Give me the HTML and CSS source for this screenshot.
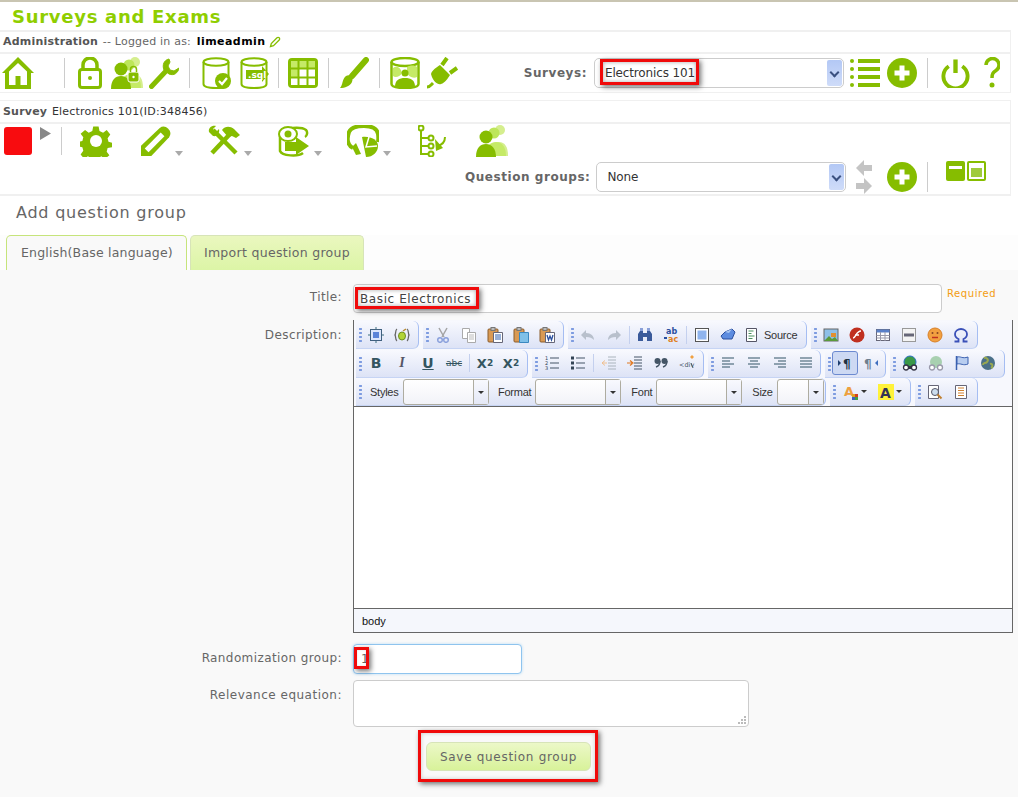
FILE: index.html
```html
<!DOCTYPE html>
<html lang="en">
<head>
<meta charset="utf-8">
<title>Surveys and Exams</title>
<link rel="stylesheet" href="styles.css">
</head>
<body>
<svg class="defs" width="0" height="0" aria-hidden="true">
  <defs>
    <symbol id="i-plus" viewBox="0 0 30 30"><circle cx="15" cy="15" r="15" fill="#86bd00"/><path d="M15 7.500v15M7.500 15h15" stroke="#fff" stroke-width="5"/></symbol>
    <symbol id="i-users" viewBox="0 0 32 32"><circle cx="24" cy="5" r="5" fill="#d5ee8e"/><path d="M13 31c0-9 4-14 10-14s9 5 9 14z" fill="#d5ee8e"/><circle cx="18" cy="8" r="5.500" fill="#bde65a"/><path d="M9 31c0-9 5-14 11-14s10 5 10 14z" fill="#c5ea66"/><circle cx="10" cy="12" r="6.500" fill="#86bd00"/><path d="M0 32c0-9 4-13 10-13s10 5 10 13z" fill="#86bd00"/></symbol>
  </defs>
</svg>
<div class="window-edge"></div>
<header class="brand">Surveys and Exams</header>

<section class="panel">
  <div class="panel-title"><b>Administration</b> -- Logged in as: <strong>limeadmin</strong>
    <svg class="edit-pen" viewBox="0 0 12 12"><path d="M1.500 10.500 2.300 7.500 8 1.800a1.400 1.400 0 0 1 2.200 2.200L4.500 9.700z" fill="none" stroke="#86bd00" stroke-width="1.300"/></svg>
  </div>
  <div class="toolbar admin-bar">
    <svg class="ic home" viewBox="0 0 32 32"><path d="M16 0 32 16h-3v16H3V16H0z" fill="#86bd00"/><path d="M16 6 7 14.500V28h6.500v-9h5v9H25V14.500z" fill="#fff"/></svg>
    <i class="vsep s1"></i>
    <svg class="ic lock" viewBox="0 0 24 32"><path d="M5 13V8a7 7 0 0 1 14 0v5" fill="none" stroke="#86bd00" stroke-width="3.500"/><rect y="11" width="24" height="21" rx="4" fill="#86bd00"/><rect x="3" y="14" width="18" height="15" rx="1" fill="#fff"/><circle cx="12" cy="21" r="2" fill="#86bd00"/></svg>
    <svg class="ic userlock" viewBox="0 0 32 32"><use href="#i-users" width="32" height="32"/><rect x="17" y="15" width="11" height="10" rx="2" fill="#86bd00" stroke="#fff"/><path d="M19.500 15v-2.500a3 3 0 0 1 6 0V15" fill="none" stroke="#86bd00" stroke-width="1.500"/><circle cx="22.500" cy="20" r="1.200" fill="#fff"/></svg>
    <svg class="ic wrench" viewBox="0 0 30 32"><path d="M2.500 29.500 17 14" stroke="#86bd00" stroke-width="5" stroke-linecap="round"/><path d="M20 2c-5 1-7 6-5 11l5 4c5 2 9-1 10-6l-5 3-4-1-2-4 2-4z" fill="#86bd00" stroke="#86bd00"/></svg>
    <i class="vsep s2"></i>
    <svg class="ic db" viewBox="0 0 30 32"><ellipse cx="14" cy="5" rx="12.500" ry="3.800" fill="#fff" stroke="#86bd00" stroke-width="2"/><path d="M1.500 5v22c0 3 6 4 12.500 4s12.500-1 12.500-4V5" fill="none" stroke="#86bd00" stroke-width="2"/><circle cx="21" cy="24" r="8" fill="#86bd00"/><path d="m17 24 3 3 5-6" fill="none" stroke="#fff" stroke-width="2.200"/></svg>
    <svg class="ic db2" viewBox="0 0 30 32"><ellipse cx="14" cy="5" rx="12.500" ry="3.800" fill="#fff" stroke="#86bd00" stroke-width="2"/><path d="M1.500 5v22c0 3 6 4 12.500 4s12.500-1 12.500-4V5" fill="none" stroke="#86bd00" stroke-width="2"/><path d="M6 13h16V9l7 8-7 8v-3H6z" fill="#86bd00"/><text x="8" y="21" class="sql-label">.sql</text></svg>
    <i class="vsep s3"></i>
    <svg class="ic grid-i" viewBox="0 0 30 30"><rect width="30" height="30" rx="4" fill="#86bd00"/><g fill="#fff"><rect x="3" y="3" width="6.500" height="6.500" fill="#c5ea66"/><rect x="11.500" y="3" width="7" height="6.500" fill="#c5ea66"/><rect x="20.500" y="3" width="6.500" height="6.500" fill="#c5ea66"/><rect x="3" y="11.500" width="6.500" height="7" fill="#c5ea66"/><rect x="11.500" y="11.500" width="7" height="7"/><rect x="20.500" y="11.500" width="6.500" height="7"/><rect x="3" y="20.500" width="6.500" height="6.500"/><rect x="11.500" y="20.500" width="7" height="6.500"/><rect x="20.500" y="20.500" width="6.500" height="6.500"/></g></svg>
    <i class="vsep s4"></i>
    <svg class="ic brush" viewBox="0 0 30 32"><path d="M27 3 13 19" stroke="#86bd00" stroke-width="6" stroke-linecap="round"/><path d="M7 19c4-2 8 1 6 6-2 4-7 6-12 6 3-3 2-9 6-12z" fill="#86bd00"/></svg>
    <i class="vsep s5"></i>
    <svg class="ic dbp" viewBox="0 0 30 32"><path d="M1.500 5v22c0 3 6 4 13.500 4s13.500-1 13.500-4V5" fill="#fff" stroke="#86bd00" stroke-width="2.500"/><ellipse cx="15" cy="5" rx="13.500" ry="4" fill="#fff" stroke="#86bd00" stroke-width="2.500"/><path d="M3 11c4-3 8 0 9 5-2 4-7 5-9 3zM17 10c3-2 8-2 10 0v10c-4 2-9-1-10-4z" fill="#c5ea66"/><circle cx="15" cy="16" r="3.500" fill="#86bd00"/><path d="M5 30c0-7 4-9 10-9s10 2 10 9z" fill="#86bd00"/></svg>
    <svg class="ic plug" viewBox="0 0 32 32"><path d="M1 30c3 0 4-2 6-4" stroke="#86bd00" stroke-width="3" fill="none"/><path d="M5 17c1-4 6-7 9-9l10 10c-2 3-5 8-9 9-3 1-8-2-10-10z" fill="#86bd00"/><path d="m16 8 5-7M24 16l7-5" stroke="#86bd00" stroke-width="4"/></svg>
    <div class="right-tools">
      <span class="tool-label">Surveys:</span>
      <div class="select survey-select">
        <span>Electronics 101</span><i class="sel-arrow"></i>
        <i class="mark mark-survey"></i>
      </div>
      <svg class="ic list" viewBox="0 0 30 30"><g fill="#86bd00"><circle cx="2" cy="3" r="2"/><circle cx="2" cy="11" r="2"/><circle cx="2" cy="19" r="2"/><circle cx="2" cy="27" r="2"/><rect x="8" y="1" width="22" height="4"/><rect x="8" y="9" width="22" height="4"/><rect x="8" y="17" width="22" height="4"/><rect x="8" y="25" width="22" height="4"/></g></svg>
      <svg class="ic plus"><use href="#i-plus"/></svg>
      <i class="vsep s6"></i>
      <svg class="ic power" viewBox="0 0 30 30"><path d="M8 8a12.500 12.500 0 1 0 14 0" fill="none" stroke="#86bd00" stroke-width="4"/><path d="M15 1v14" stroke="#86bd00" stroke-width="4.500"/></svg>
      <svg class="ic help" viewBox="0 0 16 32"><path d="M2 8a6.500 6.500 0 1 1 10 5.500c-3 2-4 3-4 7.500" fill="none" stroke="#86bd00" stroke-width="3.500"/><circle cx="8" cy="28" r="2.500" fill="#86bd00"/></svg>
    </div>
  </div>
</section>

<section class="panel survey-panel">
  <div class="panel-title survey-title"><b>Survey</b> Electronics 101(ID:348456)</div>
  <div class="survey-tools">
    <div class="toolbar survey-row">
      <span class="stop"></span>
      <svg class="play" viewBox="0 0 11 13"><path d="M0 0 11 6.500 0 13z" fill="#888"/></svg>
      <i class="vsep s7"></i>
      <svg class="ic gear" viewBox="0 0 32 32"><path d="M13 0h6l1 5 4 2 4-3 4 5-3 4 1 4 4 1v5l-5 1-1 4 3 4-5 4-4-3-3 2-1 5h-6l-1-5-4-2-4 3-4-5 3-4-1-4-5-1v-5l5-1 1-4-3-4 5-4 4 3 4-2z" transform="translate(1.500 1.500) scale(.9)" fill="#86bd00"/><circle cx="16" cy="16" r="6" fill="#fff"/></svg>
      <svg class="ic pencil" viewBox="0 0 32 32"><path d="M0 32V21L20 2c3-2 6-2 9 1s3 6 1 9L11 32z" fill="#86bd00"/><path d="M4 24 21 7l4 4L8 28z" fill="#fff"/><path d="M0 32v-8l8 8z" fill="#86bd00"/></svg>
      <i class="caret"></i>
      <svg class="ic tools" viewBox="0 0 32 32"><path d="M5 5 28 28" stroke="#86bd00" stroke-width="4.500"/><path d="M1 7c-1-4 3-7 7-6L5 4l3 3 3-3c1 4-2 8-6 7z" fill="#86bd00"/><path d="M4 28 22 9" stroke="#86bd00" stroke-width="4.500"/><path d="M14 5c3-4 8-4 12-1l6 6-4 3-4-2-4 1z" fill="#86bd00"/></svg>
      <i class="caret"></i>
      <svg class="ic eye" viewBox="0 0 32 32"><path d="M3 7c2-4 20-6 25-2 2 2 1 6-1 7M2 9v17c2 5 18 6 23 2" fill="none" stroke="#86bd00" stroke-width="2.500"/><ellipse cx="10" cy="9" rx="9" ry="7" fill="#fff" stroke="#86bd00" stroke-width="2"/><circle cx="10" cy="9" r="3.500" fill="#86bd00"/><path d="M7 17h11v-5l13 9-13 9v-4H7z" fill="#86bd00"/></svg>
      <i class="caret"></i>
      <svg class="ic chart" viewBox="0 0 32 32"><path d="M6 23C0 20 0 13 2 7c2-5 8-6 15-6 7 0 13 2 14 8 .5 3 .5 5 0 8" fill="none" stroke="#86bd00" stroke-width="4"/><path d="M15 12 19 32c7 0 12-5 12-11S24 11 15 12z" fill="#86bd00"/><path d="m22 12-3 10 11-1M9 17l7 12-5 3-4-9z" fill="none" stroke="#fff" stroke-width="1.500"/><path d="m9 18 5 11-5 1-4-8z" fill="#86bd00"/></svg>
      <i class="caret"></i>
      <svg class="ic tree" viewBox="0 0 28 32"><g fill="none" stroke="#86bd00" stroke-width="2"><circle cx="3" cy="3" r="2.500"/><circle cx="13" cy="13" r="2.500"/><circle cx="13" cy="21" r="2.500"/><circle cx="13" cy="29" r="2.500"/><path d="M3 6v23h7M3 13h7M3 21h7"/><path d="M27 12c0 6-3 8-8 9"/></g><path d="m17 14 1 12 7-3z" fill="#86bd00"/></svg>
      <svg class="ic people"><use href="#i-users"/></svg>
    </div>
    <div class="toolbar group-row">
      <span class="tool-label">Question groups:</span>
      <div class="select group-select"><span>None</span><i class="sel-arrow"></i></div>
      <svg class="nav-arrows" viewBox="0 0 16 34"><path d="M8 0v5h8v6H8v5L0 8z" fill="#c4c4c4"/><path d="M8 18v5H0v6h8v5l8-8z" fill="#c4c4c4"/></svg>
      <svg class="ic plus p2"><use href="#i-plus"/></svg>
      <i class="vsep s6"></i>
      <svg class="panes" viewBox="0 0 40 20"><rect width="19" height="20" rx="2" fill="#86bd00"/><rect x="3" y="5" width="13" height="3" fill="#fff"/><rect x="21" y="0" width="19" height="20" rx="2" fill="#86bd00"/><rect x="23" y="2" width="15" height="16" fill="#fff"/><rect x="25" y="7" width="11" height="9" fill="#9fcb3c"/></svg>
    </div>
  </div>
</section>

<h1 class="page-title">Add question group</h1>

<nav class="tabs">
  <span class="tab tab-active">English(Base language)</span>
  <span class="tab tab-import">Import question group</span>
</nav>

<main class="form">
  <div class="form-row title-row">
    <label class="form-label">Title:</label>
    <div class="field">
      <input class="text-input title-input" value="Basic Electronics">
      <i class="mark mark-title"></i>
    </div>
    <span class="required">Required</span>
  </div>
  <div class="form-row desc-row">
    <label class="form-label">Description:</label>
    <div class="editor">
      <div class="ck-toolbar">
        <div class="ck-row">
          <div class="ck-group">
            <i class="grip"></i>
            <span class="btn"><svg viewBox="0 0 16 16"><path d="M8 0v3M8 13v3M0 8h3M13 8h3" stroke="#3d6f7f"/><rect x="2.500" y="2.500" width="11" height="11" fill="#dde6fb" stroke="#40607f"/><rect x="5" y="5" width="6" height="6" fill="#5c84d8"/></svg></span>
            <span class="btn"><svg viewBox="0 0 16 16"><path d="M3 2C1 3 2 7 1 8c1 1 0 5 2 6M13 2c2 1 1 5 2 6-1 1 0 5-2 6" fill="none" stroke="#666" stroke-width="1.300"/><ellipse cx="8" cy="9" rx="3.500" ry="4" fill="#b2d536" stroke="#6f8f20"/><path d="M9 4l3-2" stroke="#b88a30" stroke-width="1.500"/></svg></span>
          </div>
          <div class="ck-group">
            <i class="grip"></i>
            <span class="btn off"><svg viewBox="0 0 16 16"><path d="M4 1l5 9M12 1 7 10" stroke="#a4a4a4" stroke-width="1.500"/><circle cx="5" cy="13" r="2.300" fill="none" stroke="#8aa0dc" stroke-width="1.500"/><circle cx="11" cy="13" r="2.300" fill="none" stroke="#8aa0dc" stroke-width="1.500"/></svg></span>
            <span class="btn off"><svg viewBox="0 0 16 16"><path d="M1.500 1.500h7v10h-7z" fill="#fff" stroke="#aaa"/><path d="M6.500 5.500h8v10h-8z" fill="#fff" stroke="#aaa"/><path d="M8 8h5M8 10h5M8 12h5" stroke="#bbb"/></svg></span>
            <span class="btn"><svg viewBox="0 0 16 16"><rect x="1" y="2" width="10" height="13" rx="1" fill="#d99a55" stroke="#8a5c2c"/><rect x="4" y="0.500" width="4" height="3" fill="#bbb" stroke="#777"/><path d="M6.500 5.500h9v10h-9z" fill="#fff" stroke="#667"/><path d="M8 8h6M8 10h6M8 12h6" stroke="#3060b0"/></svg></span>
            <span class="btn"><svg viewBox="0 0 16 16"><rect x="1" y="2" width="10" height="13" rx="1" fill="#d99a55" stroke="#8a5c2c"/><rect x="4" y="0.500" width="4" height="3" fill="#bbb" stroke="#777"/><path d="M6.500 5.500h9v10h-9z" fill="#7fc0e8" stroke="#3a88c0"/></svg></span>
            <span class="btn"><svg viewBox="0 0 16 16"><rect x="1" y="2" width="10" height="13" rx="1" fill="#d99a55" stroke="#8a5c2c"/><rect x="4" y="0.500" width="4" height="3" fill="#bbb" stroke="#777"/><path d="M6.500 5.500h9v10h-9z" fill="#fff" stroke="#667"/><path d="m8 8 1.500 5L11 9l1.500 4L14 8" fill="none" stroke="#2a4f9f" stroke-width="1.300"/></svg></span>
          </div>
          <div class="ck-group">
            <i class="grip"></i>
            <span class="btn off"><svg viewBox="0 0 16 16"><path d="M6 3 1 8l5 5V10c4 0 6 1 8 3 0-4-3-7-8-7z" fill="#b8c0cc"/></svg></span>
            <span class="btn off"><svg viewBox="0 0 16 16"><path d="m10 3 5 5-5 5v-3c-4 0-6 1-8 3 0-4 3-7 8-7z" fill="#b8c0cc"/></svg></span>
            <i class="ck-sep"></i>
            <span class="btn"><svg viewBox="0 0 16 16"><path d="M3 1h3v4H3zM10 1h3v4h-3z" fill="#8aa0d8"/><path d="M1 7l2-3h3v10H1zM15 7l-2-3h-3v10h5zM6 6h4v4H6z" fill="#3a5a9a"/></svg></span>
            <span class="btn"><svg viewBox="0 0 16 16"><text x="3" y="7" class="icon-text blue">ab</text><text x="5" y="15" class="icon-text orange">ac</text><path d="M1 11h3" stroke="#2a4f9f" stroke-width="2"/></svg></span>
            <i class="ck-sep"></i>
            <span class="btn"><svg viewBox="0 0 16 16"><rect x="1.500" y="1.500" width="13" height="13" fill="#fff" stroke="#555"/><rect x="3.500" y="3.500" width="9" height="9" fill="#8fb4ee"/></svg></span>
            <span class="btn"><svg viewBox="0 0 16 16"><path d="M5 5 12 2l3 3-3 7H3L1 9z" fill="#5d8ce0" stroke="#2a4f9f"/><path d="M5 5l4 1 3-4" fill="#a9c6f2"/></svg></span>
            <span class="btn source"><svg viewBox="0 0 16 16"><path d="M2.500 1.500h10v13h-10z" fill="#fff" stroke="#556"/><path d="M4.500 4h5M4.500 6.500h3M4.500 9h6M4.500 11.500h4" stroke="#4a9060"/></svg><em>Source</em></span>
          </div>
          <div class="ck-group">
            <i class="grip"></i>
            <span class="btn"><svg viewBox="0 0 16 16"><rect x="1" y="2" width="14" height="12" fill="#8ec0e8" stroke="#666"/><path d="M1 14l5-5 3 3 3-2 3 4z" fill="#5a9a3a"/><rect x="8" y="6" width="5" height="4" fill="#e09030"/></svg></span>
            <span class="btn"><svg viewBox="0 0 16 16"><circle cx="8" cy="8" r="7.500" fill="#c03020"/><path d="M4 11c3 0 3-7 8-7M6 8h4" fill="none" stroke="#fff" stroke-width="1.500"/></svg></span>
            <span class="btn"><svg viewBox="0 0 16 16"><rect x="1.500" y="2.500" width="13" height="11" fill="#fff" stroke="#667"/><path d="M1.500 2.500h13v3h-13z" fill="#5a80c8"/><path d="M1.500 8.500h13M1.500 11h13M5.500 5v9M10 5v9" stroke="#99a"/></svg></span>
            <span class="btn"><svg viewBox="0 0 16 16"><rect x="1.500" y="1.500" width="13" height="13" fill="#f4f4f4" stroke="#999"/><rect x="3" y="6.500" width="10" height="3" fill="#667"/></svg></span>
            <span class="btn"><svg viewBox="0 0 16 16"><circle cx="8" cy="8" r="7" fill="#f2a040" stroke="#d88028"/><circle cx="5.500" cy="6" r="1" fill="#842"/><circle cx="10.500" cy="6" r="1" fill="#842"/><path d="M5 10.500h6" stroke="#c03020" stroke-width="1.500"/></svg></span>
            <span class="btn"><svg viewBox="0 0 16 16"><path d="M1.500 14.500h4V12C3 11 2 9 2 7c0-3 3-5 6-5s6 2 6 5c0 2-1 4-3.500 5v2.500h4" fill="none" stroke="#3a50b8" stroke-width="1.800"/></svg></span>
          </div>
        </div>
        <div class="ck-row">
          <div class="ck-group">
            <i class="grip"></i>
            <span class="btn fmt b">B</span>
            <span class="btn fmt it">I</span>
            <span class="btn fmt un">U</span>
            <span class="btn fmt st">abc</span>
            <i class="ck-sep"></i>
            <span class="btn fmt b sm">X<sub>2</sub></span>
            <span class="btn fmt b sm">X<sup>2</sup></span>
          </div>
          <div class="ck-group">
            <i class="grip"></i>
            <span class="btn"><svg viewBox="0 0 16 16"><path d="M6 3h9M6 8h9M6 13h9" stroke="#456" stroke-width="1.100"/><text x="1" y="5" class="icon-text tiny">1</text><text x="1" y="10" class="icon-text tiny">2</text><text x="1" y="15" class="icon-text tiny">3</text></svg></span>
            <span class="btn"><svg viewBox="0 0 16 16"><path d="M6 3h9M6 8h9M6 13h9" stroke="#456" stroke-width="1.100"/><rect x="1" y="1.500" width="3" height="3" fill="#345"/><rect x="1" y="6.500" width="3" height="3" fill="#345"/><rect x="1" y="11.500" width="3" height="3" fill="#345"/></svg></span>
            <i class="ck-sep"></i>
            <span class="btn"><svg viewBox="0 0 16 16"><path d="M7 2h8M7 5h8M7 8h8M7 11h8M7 14h8" stroke="#aab4bc"/><path d="M1 8h5M4 5.500 1 8l3 2.500" fill="none" stroke="#f0c090"/></svg></span>
            <span class="btn"><svg viewBox="0 0 16 16"><path d="M7 2h8M7 5h8M7 8h8M7 11h8M7 14h8" stroke="#456"/><path d="M0 8h5M3 5.500 6 8l-3 2.500" fill="none" stroke="#e07820" stroke-width="1.200"/></svg></span>
            <span class="btn"><svg viewBox="0 0 16 16"><circle cx="4.500" cy="6" r="3" fill="#456"/><circle cx="11.500" cy="6" r="3" fill="#456"/><path d="M7 6c0 3-1 5-4 6M14 6c0 3-1 5-4 6" fill="none" stroke="#456" stroke-width="1.500"/></svg></span>
            <span class="btn"><svg viewBox="0 0 16 16"><text x="0" y="12" class="icon-text div-t">&lt;div</text><path d="m13 0 2 2-2 2-2-2z" fill="#f0a040"/><path d="m12 8 2 5" stroke="#456"/></svg></span>
          </div>
          <div class="ck-group tight">
            <i class="grip"></i>
            <span class="btn"><svg viewBox="0 0 16 16"><path d="M2 3h12M2 6h8M2 9h12M2 12h8" stroke="#356" stroke-width="1.200"/></svg></span>
            <span class="btn"><svg viewBox="0 0 16 16"><path d="M2 3h12M4 6h8M2 9h12M4 12h8" stroke="#356" stroke-width="1.200"/></svg></span>
            <span class="btn"><svg viewBox="0 0 16 16"><path d="M2 3h12M6 6h8M2 9h12M6 12h8" stroke="#356" stroke-width="1.200"/></svg></span>
            <span class="btn"><svg viewBox="0 0 16 16"><path d="M2 3h12M2 6h12M2 9h12M2 12h12" stroke="#356" stroke-width="1.200"/></svg></span>
          </div>
          <div class="ck-group tight">
            <i class="grip"></i>
            <span class="btn on"><svg viewBox="0 0 16 16"><path d="M1 5l3 3-3 3z" fill="#1f3f6f"/><text x="6" y="13" class="icon-text pil">¶</text></svg></span>
            <span class="btn"><svg viewBox="0 0 16 16"><path d="M15 5l-3 3 3 3z" fill="#3f6fbf"/><text x="1" y="13" class="icon-text pil muted">¶</text></svg></span>
          </div>
          <div class="ck-group">
            <i class="grip"></i>
            <span class="btn"><svg viewBox="0 0 16 16"><circle cx="8" cy="7" r="6" fill="#3a9848" stroke="#2a6fbf"/><path d="M1 11h14v3H1z" fill="#334" /><circle cx="4" cy="12.500" r="2.500" fill="#fff" stroke="#334" stroke-width="1.300"/><circle cx="12" cy="12.500" r="2.500" fill="#fff" stroke="#334" stroke-width="1.300"/></svg></span>
            <span class="btn off"><svg viewBox="0 0 16 16"><circle cx="8" cy="7" r="6" fill="#a8d0b0"/><circle cx="4" cy="12.500" r="2.500" fill="#fff" stroke="#99a" stroke-width="1.300"/><circle cx="12" cy="12.500" r="2.500" fill="#fff" stroke="#99a" stroke-width="1.300"/></svg></span>
            <span class="btn"><svg viewBox="0 0 16 16"><path d="M2.500 1v14" stroke="#3a60b0" stroke-width="1.500"/><path d="M3 2c4-1 5 2 11 0v7c-5 2-7-1-11 0z" fill="#b8cdf0" stroke="#3a60b0"/></svg></span>
            <span class="btn"><svg viewBox="0 0 16 16"><circle cx="8" cy="8" r="7" fill="#4a7088"/><path d="M4 3c3-1 5 2 3 4s-4 0-4 3M10 9c3-1 3 3 1 4" fill="none" stroke="#98a850" stroke-width="2"/></svg></span>
          </div>
        </div>
        <div class="ck-row">
          <div class="ck-group tight">
            <i class="grip"></i>
            <em class="combo-label styles">Styles</em><span class="combo c-wide"><i></i></span>
            <em class="combo-label format">Format</em><span class="combo c-wide"><i></i></span>
            <em class="combo-label">Font</em><span class="combo c-wide"><i></i></span>
            <em class="combo-label">Size</em><span class="combo c-size"><i></i></span>
          </div>
          <div class="ck-group">
            <i class="grip"></i>
            <span class="btn drop"><svg viewBox="0 0 16 16"><text x="1" y="12" class="icon-text color-a">A</text><rect x="9" y="10" width="3" height="3" fill="#e0a020"/><rect x="12" y="10" width="3" height="3" fill="#d04020"/><rect x="9" y="13" width="3" height="3" fill="#3a60c0"/><rect x="12" y="13" width="3" height="3" fill="#40a040"/></svg><i class="mini-caret"></i></span>
            <span class="btn drop"><svg viewBox="0 0 16 16"><rect width="16" height="16" fill="#fff23a"/><text x="2" y="14" class="icon-text bg-a">A</text></svg><i class="mini-caret"></i></span>
          </div>
          <div class="ck-group">
            <i class="grip"></i>
            <span class="btn"><svg viewBox="0 0 16 16"><path d="M1.500 1.500h10v13h-10z" fill="#fff" stroke="#667"/><circle cx="8" cy="8" r="3.500" fill="#cde" stroke="#556"/><path d="m10.500 10.500 4 4" stroke="#c08030" stroke-width="2"/></svg></span>
            <span class="btn"><svg viewBox="0 0 16 16"><path d="M2.500 1.500h11v13h-11z" fill="#fff" stroke="#667"/><path d="M5 4h6M5 6.500h6M5 9h6M5 11.500h6" stroke="#d08030"/></svg></span>
          </div>
        </div>
      </div>
      <div class="ck-content"></div>
      <div class="ck-path">body</div>
    </div>
  </div>
  <div class="form-row rand-row">
    <label class="form-label">Randomization group:</label>
    <div class="field">
      <input class="text-input rand-input" value="1">
      <i class="mark mark-rand"></i>
    </div>
  </div>
  <div class="form-row rel-row">
    <label class="form-label">Relevance equation:</label>
    <textarea class="rel-input"></textarea>
  </div>
  <div class="save-row">
    <div class="save-frame">
      <button class="save-btn" type="button">Save question group</button>
    </div>
  </div>
</main>
</body>
</html>
```

FILE: styles.css
```css
* { box-sizing: border-box; }
html, body { margin: 0; height: 100%; }
body {
  display: flex;
  flex-direction: column;
  height: 797px;
  overflow: hidden;
  background: #fff;
  color: #666;
  font: 11px "DejaVu Sans", Verdana, sans-serif;
}
.defs { position: absolute; }
.window-edge { height: 2px; background: #c9c5b2; flex: none; }

.brand {
  flex: none;
  height: 28px;
  padding: 6px 0 0 12px;
  color: #8fce00;
  font-size: 18px;
  font-weight: bold;
  line-height: 18px;
  letter-spacing: 0.72px;
}

.panel {
  flex: none;
  width: 1011px;
  border: solid #f0f0f0;
  border-width: 2px 1px 1px 0;
}
.panel-title {
  height: 22px;
  padding: 0 0 0 3px;
  border-bottom: 2px solid #f0f0f0;
  display: flex;
  align-items: center;
  gap: 1px;
  line-height: 20px;
  letter-spacing: .2px;
  white-space: pre;
}
.panel-title b { color: #555; }
.panel-title strong { color: #000; margin-left: 1px; letter-spacing: .45px; }
.edit-pen { width: 12px; height: 12px; margin-left: 2px; }

.toolbar { display: flex; align-items: center; }
.admin-bar { height: 38px; padding-left: 2px; }
.ic { flex: none; display: block; }
.vsep { flex: none; width: 1px; height: 30px; background: #ccc; }
.home { width: 32px; height: 32px; }
.s1 { margin: 0 13px 0 30px; }
.lock { width: 24px; height: 32px; }
.userlock { width: 32px; height: 32px; margin-left: 9px; }
.wrench { width: 30px; height: 32px; margin-left: 6px; }
.s2 { margin: 0 12px 0 10px; }
.db { width: 30px; height: 32px; }
.db2 { width: 30px; height: 32px; margin-left: 8px; }
.s3 { margin: 0 9px 0 8px; }
.grid-i { width: 30px; height: 30px; }
.s4 { margin: 0 10px; }
.brush { width: 30px; height: 32px; }
.s5 { margin: 0 10px; }
.dbp { width: 30px; height: 32px; }
.plug { width: 32px; height: 32px; margin-left: 6px; }
.sql-label { font: bold 9px "DejaVu Sans", sans-serif; fill: #fff; }

.right-tools { display: flex; align-items: center; margin-left: auto; margin-right: 10px; }
.tool-label {
  font-weight: bold;
  font-size: 12px;
  color: #666;
  letter-spacing: 0.55px;
  white-space: nowrap;
}
.select {
  position: relative;
  flex: none;
  width: 250px;
  height: 30px;
  margin-left: 7px;
  display: flex;
  align-items: center;
  padding-left: 10px;
  background: #fff;
  border: 1px solid #ccc;
  border-radius: 5px;
  font: 12px "DejaVu Sans", sans-serif;
  letter-spacing: -.15px;
  color: #333;
}
.sel-arrow {
  position: absolute;
  right: 1px;
  top: 1px;
  width: 15px;
  height: 26px;
  background: linear-gradient(#b3c8f5, #cfdcf9);
  border-radius: 2px;
}
.sel-arrow::after {
  content: "";
  position: absolute;
  left: 4px;
  top: 9px;
  width: 5px;
  height: 5px;
  border: solid #3a5080;
  border-width: 0 2px 2px 0;
  transform: rotate(45deg);
}
.survey-select { width: 250px; }
.list { width: 30px; height: 30px; margin-left: 6px; }
.plus { width: 30px; height: 30px; margin-left: 7px; }
.s6 { margin: 0 13px 0 10px; }
.power { width: 29px; height: 30px; }
.help { width: 16px; height: 32px; margin-left: 14px; }

.mark {
  position: absolute;
  border: 3px solid #f00a0a;
  box-shadow: 2px 2px 5px rgba(0, 0, 0, .55), inset 0 0 4px rgba(0, 0, 0, .35);
  pointer-events: none;
}
.mark-survey { left: 5px; top: 0; width: 99px; height: 26px; }

.survey-panel { margin-top: 7px; border-width: 1px 1px 2px 0; height: 96px; }
.survey-title { height: 23px; letter-spacing: .2px; color: #333; }
.survey-tools { display: flex; flex-direction: column; }
.survey-row { height: 36px; padding-left: 4px; align-items: flex-start; }
.stop { flex: none; width: 28px; height: 28px; margin-top: 3px; background: #f80c0f; border-radius: 3px; }
.play { flex: none; width: 11px; height: 13px; margin: 3px 0 0 8px; }
.survey-row .vsep { height: 28px; margin: 3px 0 0 10px; }
.gear { width: 32px; height: 32px; margin-left: 18px; }
.survey-row .ic { margin-top: 1px; }
.pencil { width: 30px; height: 32px; margin-left: 29px; }
.caret {
  flex: none;
  width: 0;
  height: 0;
  margin: 27px 0 0 4px;
  border: solid transparent;
  border-width: 5px 4.500px 0;
  border-top-color: #aaa;
}
.tools { width: 32px; height: 32px; margin-left: 25px; }
.eye { width: 32px; height: 32px; margin-left: 26px; }
.chart { width: 32px; height: 32px; margin-left: 25px; }
.tree { width: 28px; height: 32px; margin-left: 27px; }
.people { width: 32px; height: 32px; margin-left: 30px; }

.group-row { height: 33px; padding-left: 465px; }
.group-select { width: 250px; margin-left: 6px; }
.nav-arrows { flex: none; width: 16px; height: 34px; margin-left: 10px; }
.p2 { margin-left: 15px; }
.group-row .s6 { margin-right: 18px; }
.panes { flex: none; width: 40px; height: 20px; margin-top: -11px; }

.page-title {
  flex: none;
  margin: 7px 0 0;
  padding-left: 16px;
  height: 32px;
  color: #666;
  font-size: 16px;
  font-weight: normal;
  line-height: 20px;
  letter-spacing: .77px;
  white-space: nowrap;
}
.tabs { flex: none; display: flex; gap: 3px; padding-left: 6px; height: 35px; background: #fdfdfd; }
.tab {
  height: 35px;
  padding: 0 13px 2px;
  display: flex;
  align-items: center;
  font-size: 12.500px;
  letter-spacing: .2px;
  color: #666;
  background: linear-gradient(#eaf7bf, #dcf5a6);
  border: 1px solid #d7e4b8;
  border-bottom: 0;
  border-radius: 5px 5px 0 0;
}
.tab-import { letter-spacing: .3px; }
.tab-active { padding: 0 13px 2px 14px; background: #f9f9f9; border-color: #c6e47b; }

.form { flex: 1; background: #f9f9f9; padding-top: 14px; }
.form-row { display: flex; align-items: flex-start; }
.form-label {
  flex: none;
  width: 342px;
  padding-top: 6px;
  text-align: right;
  font-size: 12px;
  line-height: 15px;
  letter-spacing: .4px;
  color: #666;
  white-space: nowrap;
}
.field { position: relative; flex: none; margin-left: 11px; }
.text-input {
  display: block;
  height: 29px;
  padding: 0 6px;
  background: #fff;
  border: 1px solid #ccc;
  border-radius: 4px;
  outline: 0;
  color: #444;
  font: 12px "DejaVu Sans", sans-serif;
  letter-spacing: .6px;
}
.title-input { width: 589px; }
.mark-title { left: 2px; top: 3px; width: 124px; height: 22px; }
.required { margin: 3px 0 0 5px; font-size: 10px; color: #f39c12; letter-spacing: .6px; line-height: 13px; }

.desc-row { margin-top: 7px; }
.desc-row .form-label { padding-top: 8px; }
.editor {
  flex: none;
  width: 660px;
  margin-left: 11px;
  border: solid #666;
  border-width: 0 1px 1px 1px;
  background: #f7f8fd;
  height: 313px;
  display: flex;
  flex-direction: column;
}
.ck-toolbar { flex: none; height: 86px; padding: 1px 0 0 2px; }
.ck-row { display: flex; gap: 4px; height: 28.500px; }
.ck-group {
  display: flex;
  align-items: center;
  height: 28px;
  padding-right: 3px;
  border-right: 1px solid #a5bdf2;
  border-bottom: 1px solid #c6d4f4;
  border-radius: 0 6px 6px 0;
  background: linear-gradient(#f8f9fe, #dde3f6);
  font: 11px "Liberation Sans", Arial, sans-serif;
  color: #333;
}
.ck-group.tight { padding-right: 1px; }
.grip {
  flex: none;
  width: 4px;
  height: 15px;
  margin-left: 3px;
  background: radial-gradient(circle, #7d9be0 1.100px, transparent 1.300px) 0 0 / 3px 4px repeat-y;
}
.btn {
  flex: none;
  width: 26px;
  height: 24px;
  display: flex;
  align-items: center;
  justify-content: center;
}
.btn svg { width: 16px; height: 16px; flex: none; }
.btn.on { background: #cdd9f3; border: 1px solid #6c8ad0; border-radius: 3px; }
.ck-sep { flex: none; width: 1px; height: 18px; margin: 0 2px; background: #c4d0ee; }
.source { width: 62px; gap: 4px; justify-content: flex-start; padding-left: 3px; }
.source em, .combo-label { font-style: normal; font-size: 11px; letter-spacing: -.25px; color: #333; }
.fmt { color: #345560; font: bold 14px "DejaVu Sans", sans-serif; }
.it { font-style: italic; font-family: "Liberation Serif", serif; color: #556; }
.un { text-decoration: underline; }
.st { font-size: 9px; font-weight: normal; text-decoration: line-through; }
.sm { font-size: 13px; }
.sm sub, .sm sup { font-size: 9px; line-height: 0; }
.sm sub { vertical-align: -4px; }
.sm sup { vertical-align: 5px; }
.icon-text { font: bold 8px "DejaVu Sans", sans-serif; }
.icon-text.blue { fill: #2a4f9f; }
.icon-text.orange { fill: #e08020; }
.icon-text.tiny { font-size: 5px; fill: #345; font-weight: normal; }
.icon-text.div-t { font-size: 6.500px; fill: #456; font-weight: normal; }
.icon-text.pil { font-size: 12px; fill: #234; }
.icon-text.pil.muted { fill: #6f7f8f; }
.icon-text.color-a { font-size: 13px; fill: #eda040; }
.icon-text.bg-a { font-size: 14px; fill: #335; }
.combo-label { padding: 0 4px 0 10px; white-space: nowrap; }
.combo-label.styles { padding: 0 5px 0 7px; }
.combo-label.format { padding-left: 8.500px; }
.combo {
  flex: none;
  position: relative;
  height: 26px;
  background: linear-gradient(#fff, #f2f3f8);
  border: 1px solid #aeaca0;
  border-radius: 3px;
}
.c-wide { width: 86px; }
.c-size { width: 47px; }
.combo i {
  position: absolute;
  right: 0;
  top: 0;
  bottom: 0;
  width: 15px;
  border-left: 1px solid #aeaca0;
  background: linear-gradient(#f8f9fe, #e4e8f6);
}
.combo i::after, .mini-caret {
  content: "";
  border: solid transparent;
  border-width: 3px 3.500px 0;
  border-top-color: #333;
}
.combo i::after { position: absolute; left: 4px; top: 11px; }
.drop { width: 35px; gap: 2px; justify-content: flex-start; padding-left: 6px; }
.mini-caret { flex: none; }
.ck-content { flex: 1; background: #fff; border-top: 1px solid #666; }
.ck-path {
  flex: none;
  height: 24px;
  padding-left: 8px;
  border-top: 1px solid #666;
  background: #f5f7fc;
  color: #111;
  font: 11px/24px "Liberation Sans", Arial, sans-serif;
}

.rand-row { margin-top: 11px; }
.rand-row .form-label { padding-top: 7px; }
.rand-input { width: 169px; height: 30px; padding-left: 7px; color: #666; letter-spacing: 0; border-color: #8fc4ee; box-shadow: 0 0 3px #b8dcf6; }
.mark.mark-rand { left: 1px; top: 3px; width: 15px; height: 22px; box-shadow: 2px 2px 5px rgba(0, 0, 0, .55), inset 0 0 2px rgba(0, 0, 0, .15); }
.rel-row { margin-top: 6px; }
.rel-row .form-label { padding-top: 8px; letter-spacing: .5px; }
.rel-input {
  flex: none;
  width: 396px;
  height: 47px;
  margin: 0 0 0 11px;
  display: block;
  resize: none;
  border: 1px solid #ccc;
  border-radius: 4px;
  outline: 0;
  background:
    linear-gradient(#bbb, #bbb) right 2px bottom 2px / 2px 2px no-repeat,
    linear-gradient(#bbb, #bbb) right 5px bottom 2px / 2px 2px no-repeat,
    linear-gradient(#bbb, #bbb) right 8px bottom 2px / 2px 2px no-repeat,
    linear-gradient(#bbb, #bbb) right 2px bottom 5px / 2px 2px no-repeat,
    linear-gradient(#bbb, #bbb) right 5px bottom 5px / 2px 2px no-repeat,
    linear-gradient(#bbb, #bbb) right 2px bottom 8px / 2px 2px no-repeat,
    #fff;
}
.save-row { margin: 3px 0 0 418px; }
.save-frame {
  width: 180px;
  height: 52px;
  padding: 9px 0 0 5px;
  border: 3px solid #f00a0a;
  box-shadow: 2px 2px 5px rgba(0, 0, 0, .55), inset 0 0 4px rgba(0, 0, 0, .2);
}
.save-btn {
  width: 165px;
  height: 29px;
  padding: 0;
  color: #666;
  font: 12px "DejaVu Sans", sans-serif;
  letter-spacing: .7px;
  background: linear-gradient(#ecf8c8, #d8f29a);
  border: 1px solid #d7e4b8;
  border-radius: 6px;
}
```
